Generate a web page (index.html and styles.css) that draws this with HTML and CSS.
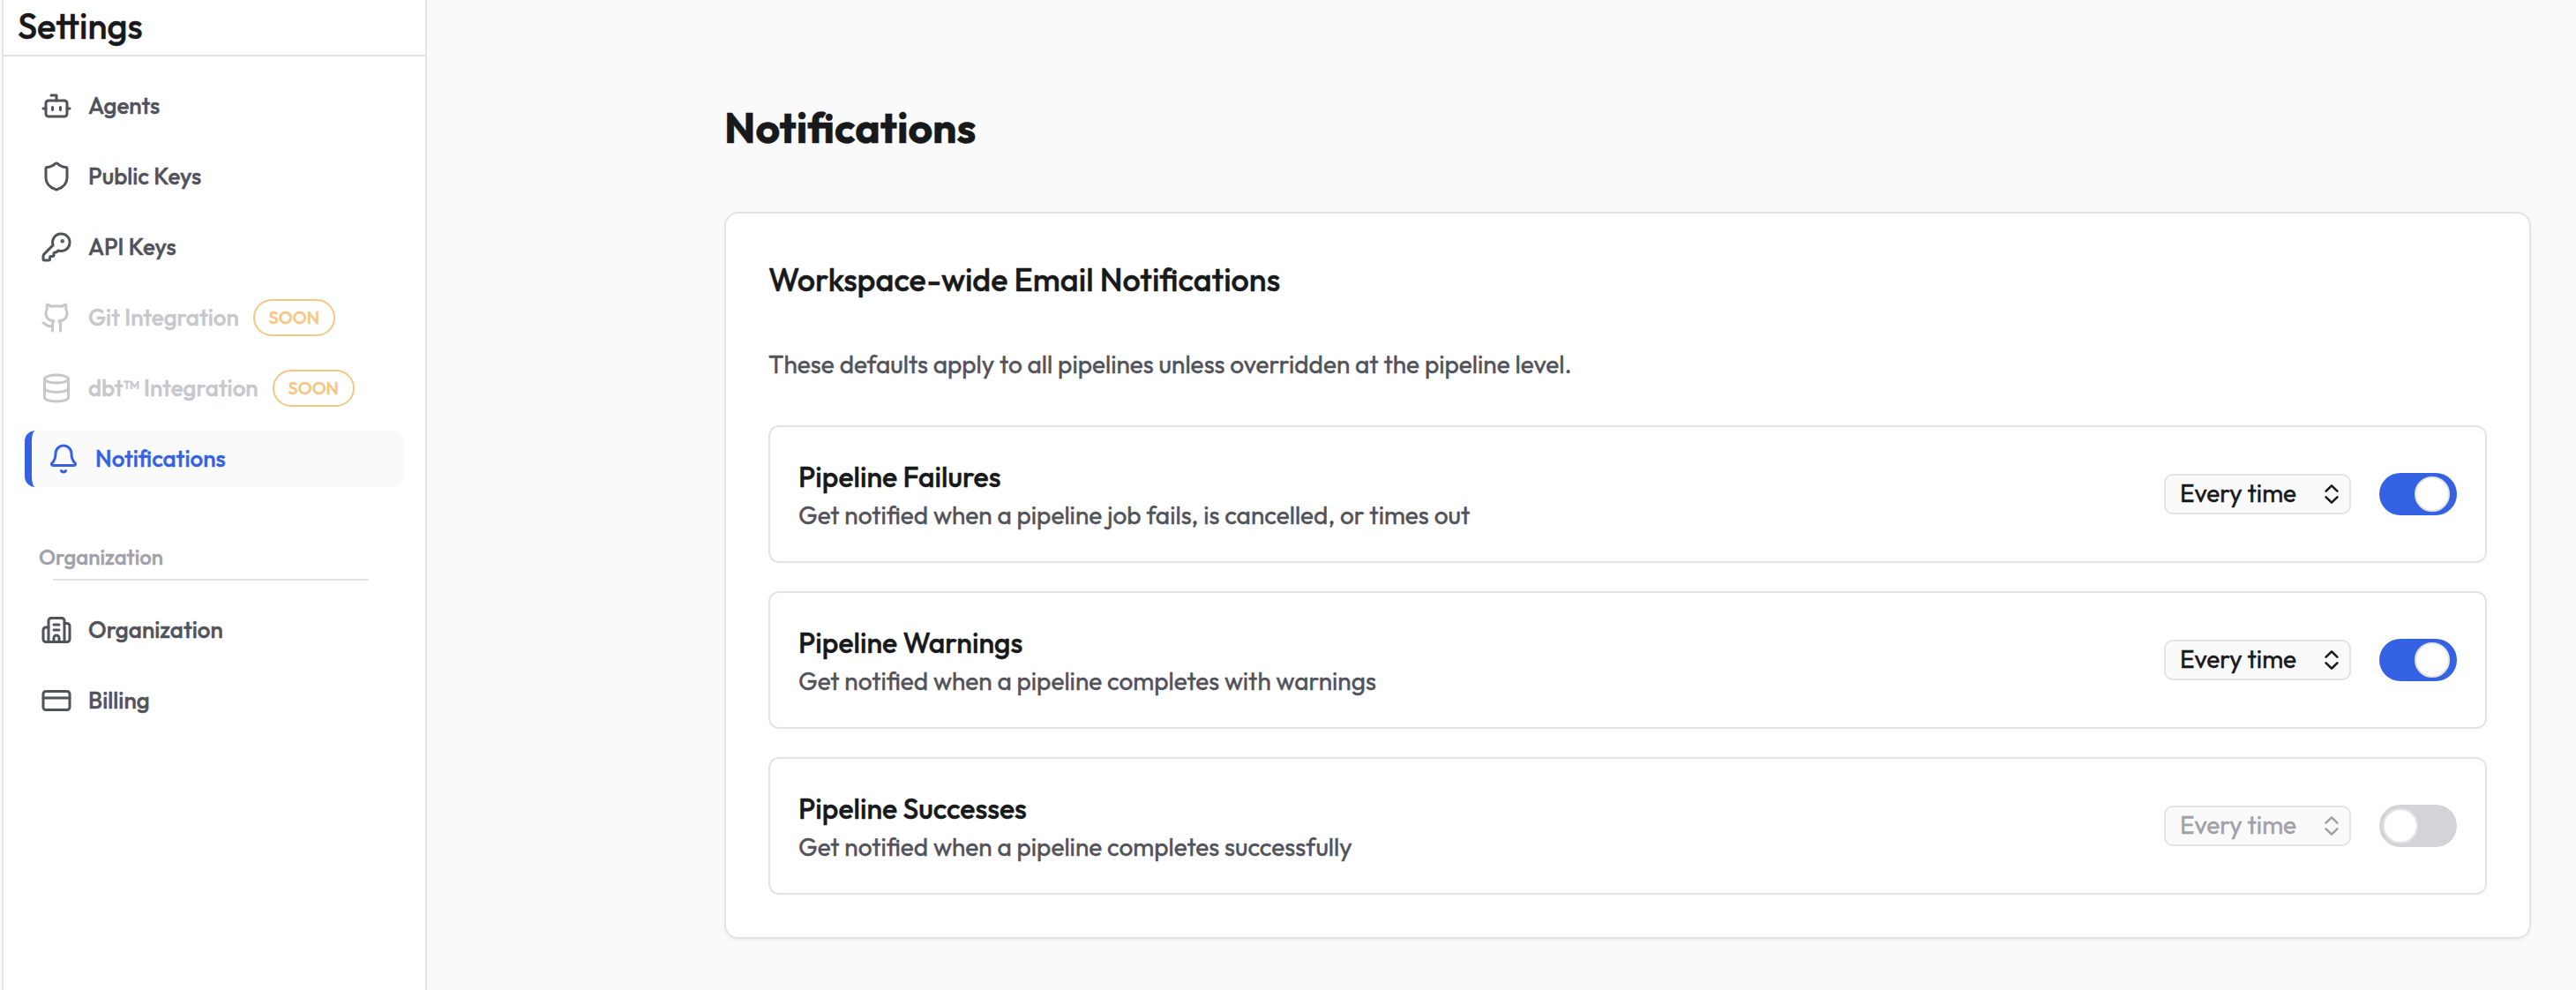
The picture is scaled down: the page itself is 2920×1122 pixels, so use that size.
FILE: index.html
```html
<!DOCTYPE html>
<html lang="en">
<head>
<meta charset="utf-8">
<title>Settings – Notifications</title>
<link rel="stylesheet" href="styles.css">
</head>
<body>
<div class="app">
  <aside class="sidebar">
    <h2 class="sidebar-title">Settings</h2>
    <nav class="nav">
      <a class="nav-item">
        <svg class="icon" viewBox="0 0 24 24"><path d="M12 8V4H8"/><rect width="16" height="12" x="4" y="8" rx="2"/><path d="M2 14h2M20 14h2M15 13v2M9 13v2"/></svg>
        <span class="nav-label">Agents</span>
      </a>
      <a class="nav-item">
        <svg class="icon" viewBox="0 0 24 24"><path d="M20 13c0 5-3.5 7.5-7.66 8.95a1 1 0 0 1-.67-.01C7.5 20.5 4 18 4 13V6a1 1 0 0 1 1-1c2 0 4.5-1.2 6.24-2.72a1.17 1.17 0 0 1 1.52 0C14.51 3.81 17 5 19 5a1 1 0 0 1 1 1z"/></svg>
        <span class="nav-label">Public Keys</span>
      </a>
      <a class="nav-item">
        <svg class="icon" viewBox="0 0 24 24"><path d="M2.586 17.414A2 2 0 0 0 2 18.828V21a1 1 0 0 0 1 1h3a1 1 0 0 0 1-1v-1a1 1 0 0 1 1-1h1a1 1 0 0 0 1-1v-1a1 1 0 0 1 1-1h.172a2 2 0 0 0 1.414-.586l.814-.814a6.5 6.5 0 1 0-4-4z"/><circle cx="16.5" cy="7.5" r=".5" fill="currentColor"/></svg>
        <span class="nav-label">API Keys</span>
      </a>
      <a class="nav-item disabled">
        <svg class="icon" viewBox="0 0 24 24"><path d="M15 22v-4a4.8 4.8 0 0 0-1-3.5c3 0 6-2 6-5.5.08-1.25-.27-2.48-1-3.5.28-1.15.28-2.35 0-3.5 0 0-1 0-3 1.5-2.64-.5-5.36-.5-8 0C6 2 5 2 5 2c-.3 1.15-.3 2.35 0 3.5A5.403 5.403 0 0 0 4 9c0 3.5 3 5.5 6 5.5-.39.49-.68 1.05-.85 1.65-.17.6-.22 1.23-.15 1.85v4"/><path d="M9 18c-4.51 2-5-2-7-2"/></svg>
        <span class="nav-label">Git Integration</span>
        <span class="badge">SOON</span>
      </a>
      <a class="nav-item disabled">
        <svg class="icon" viewBox="0 0 24 24"><ellipse cx="12" cy="5" rx="9" ry="3"/><path d="M3 5V19A9 3 0 0 0 21 19V5"/><path d="M3 12A9 3 0 0 0 21 12"/></svg>
        <span class="nav-label">dbt™ Integration</span>
        <span class="badge">SOON</span>
      </a>
      <a class="nav-item active">
        <svg class="icon" viewBox="0 0 24 24"><path d="M10.268 21a2 2 0 0 0 3.464 0"/><path d="M3.262 15.326A1 1 0 0 0 4 17h16a1 1 0 0 0 .74-1.673C19.41 13.956 18 12.499 18 8A6 6 0 0 0 6 8c0 4.499-1.411 5.956-2.738 7.326"/></svg>
        <span class="nav-label">Notifications</span>
      </a>
    </nav>
    <h3 class="nav-heading">Organization</h3>
    <nav class="nav nav-org">
      <a class="nav-item">
        <svg class="icon" viewBox="0 0 24 24"><path d="M10 12h4M10 8h4M14 21v-3a2 2 0 0 0-4 0v3"/><path d="M6 10H4a2 2 0 0 0-2 2v7a2 2 0 0 0 2 2h16a2 2 0 0 0 2-2V9a2 2 0 0 0-2-2h-2"/><path d="M6 21V5a2 2 0 0 1 2-2h8a2 2 0 0 1 2 2v16"/></svg>
        <span class="nav-label">Organization</span>
      </a>
      <a class="nav-item">
        <svg class="icon" viewBox="0 0 24 24"><rect width="20" height="14" x="2" y="5" rx="2"/><path d="M2 10h20"/></svg>
        <span class="nav-label">Billing</span>
      </a>
    </nav>
  </aside>
  <main class="content">
    <h1 class="page-title">Notifications</h1>
    <section class="card">
      <h2 class="card-title">Workspace-wide Email Notifications</h2>
      <p class="card-text">These defaults apply to all pipelines unless overridden at the pipeline level.</p>
      <div class="rules">
        <div class="rule">
          <div class="rule-text">
            <h3 class="rule-title">Pipeline Failures</h3>
            <p class="rule-desc">Get notified when a pipeline job fails, is cancelled, or times out</p>
          </div>
          <div class="select"><span class="select-value">Every time</span><svg class="chevrons" viewBox="0 0 16 22"><path d="M1.6 7.6 8 1.4l6.4 6.2M1.6 14.4 8 20.6l6.4-6.2"/></svg></div>
          <div class="switch on"><span class="knob"></span></div>
        </div>
        <div class="rule">
          <div class="rule-text">
            <h3 class="rule-title">Pipeline Warnings</h3>
            <p class="rule-desc">Get notified when a pipeline completes with warnings</p>
          </div>
          <div class="select"><span class="select-value">Every time</span><svg class="chevrons" viewBox="0 0 16 22"><path d="M1.6 7.6 8 1.4l6.4 6.2M1.6 14.4 8 20.6l6.4-6.2"/></svg></div>
          <div class="switch on"><span class="knob"></span></div>
        </div>
        <div class="rule">
          <div class="rule-text">
            <h3 class="rule-title">Pipeline Successes</h3>
            <p class="rule-desc">Get notified when a pipeline completes successfully</p>
          </div>
          <div class="select off"><span class="select-value">Every time</span><svg class="chevrons" viewBox="0 0 16 22"><path d="M1.6 7.6 8 1.4l6.4 6.2M1.6 14.4 8 20.6l6.4-6.2"/></svg></div>
          <div class="switch"><span class="knob"></span></div>
        </div>
      </div>
    </section>
  </main>
</div>
</body>
</html>
```
FILE: styles.css
```css
* { box-sizing: border-box; }

body {
  margin: 0;
  background: #fafafa;
  color: #18191b;
  font-family: Outfit, Lato, sans-serif;
  -webkit-text-stroke: 0.4px currentColor;
}

h1, h2, h3, p { margin: 0; }

.app {
  display: flex;
  height: 1122px;
  padding-left: 2px;
  overflow: hidden;
}

/* Sidebar */
.sidebar {
  flex: none;
  width: 482px;
  background: #fff;
  border: solid #e4e4e4;
  border-width: 0 2px;
}

.sidebar-title {
  height: 64px;
  padding-left: 16px;
  border-bottom: 2px solid #e4e4e4;
  font-size: 40px;
  font-weight: 500;
  line-height: 58px;
}

.nav {
  display: flex;
  flex-direction: column;
  gap: 16px;
  padding: 24px 24px 0;
}

.nav-item {
  display: flex;
  align-items: center;
  height: 64px;
  padding-left: 18px;
  border-radius: 12px;
  color: #52525b;
  font-size: 26px;
  font-weight: 500;
}

.nav-item.active {
  border-left: 8px solid #3562e3;
  background: #fafafa;
  color: #3562e3;
}

.nav-item.disabled { color: #c7c7cc; }

.icon {
  flex: none;
  width: 36px;
  height: 36px;
  margin-right: 18px;
  fill: none;
  stroke: currentColor;
  stroke-width: 2;
  stroke-linecap: round;
  stroke-linejoin: round;
}

.nav-label {
  line-height: 40px;
  white-space: nowrap;
}

.badge {
  flex: none;
  width: 93px;
  height: 42px;
  margin-left: 16px;
  border: 2px solid #f4c785;
  border-radius: 21px;
  color: #f4c785;
  font-size: 20px;
  line-height: 37px;
  text-align: center;
}

.nav-heading {
  height: 106px;
  padding: 61px 0 0 40px;
  color: #a1a1aa;
  font-size: 24px;
  font-weight: 500;
  line-height: 36px;
}

.nav-org::before {
  content: "";
  height: 2px;
  margin: -26px 40px 8px 32px;
  background: #e4e4e4;
}

/* Content */
.content {
  width: 2048px;
  margin: 114px 0 0 337px;
}

.page-title {
  margin-bottom: 66px;
  font-size: 48px;
  font-weight: 700;
  line-height: 60px;
}

.card {
  height: 824px;
  padding: 48px;
  background: #fff;
  border: 2px solid #e4e4e4;
  border-radius: 16px;
  box-shadow: 0 2px 4px rgba(0, 0, 0, 0.05);
}

.card-title {
  font-size: 36px;
  font-weight: 500;
  line-height: 53px;
}

.card-text {
  margin: 48px 0 47px;
  color: #52525b;
  font-size: 28px;
  line-height: 44px;
}

.rules {
  display: flex;
  flex-direction: column;
  gap: 32px;
}

.rule {
  display: flex;
  align-items: center;
  height: 156px;
  padding: 0 32px;
  border: 2px solid #e4e4e4;
  border-radius: 12px;
}

.rule-text {
  flex: 1;
  padding-top: 4px;
}

.rule-title {
  font-size: 32px;
  font-weight: 500;
  line-height: 44px;
}

.rule-desc {
  color: #52525b;
  font-size: 28px;
  line-height: 44px;
}

.select {
  display: flex;
  align-items: center;
  justify-content: space-between;
  width: 212px;
  height: 46px;
  padding: 0 12px 0 16px;
  background: #fafafa;
  border: 2px solid #e4e4e4;
  border-radius: 10px;
  font-size: 28px;
}

.select.off { color: #a1a1aa; }

.select-value {
  padding-bottom: 3px;
  line-height: 35px;
}

.chevrons {
  width: 16px;
  height: 22px;
  fill: none;
  stroke: currentColor;
  stroke-width: 2.6;
  stroke-linecap: round;
  stroke-linejoin: round;
}

.switch {
  display: flex;
  width: 88px;
  height: 48px;
  margin-left: 32px;
  padding: 4px;
  background: #d4d4d8;
  border-radius: 24px;
}

.switch.on {
  padding-left: 40px;
  background: #3562e3;
}

.knob {
  width: 40px;
  height: 40px;
  background: #fff;
  border: 2px solid #e4e4e4;
  border-radius: 50%;
}
```
